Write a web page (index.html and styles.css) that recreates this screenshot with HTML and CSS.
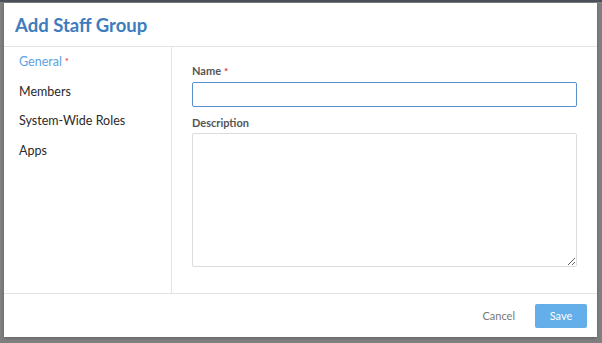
FILE: index.html
```html
<!DOCTYPE html>
<html lang="en">

<head>
    <meta charset="UTF-8">
    <meta name="viewport" content="width=device-width, initial-scale=1.0">
    <title>Add Staff Group</title>
    <link rel="stylesheet" href="styles.css">
</head>

<body>
    <div class="topbar"></div>

    <section class="modal">
        <header class="modal-header">
            <h1>Add Staff Group</h1>
        </header>

        <div class="modal-body">
            <nav class="modal-nav">
                <a class="active" href="#">General<span class="req">*</span></a>
                <a href="#">Members</a>
                <a href="#">System-Wide Roles</a>
                <a href="#">Apps</a>
            </nav>

            <form class="modal-form">
                <label for="name">Name<span class="req">*</span></label>
                <input type="text" id="name">

                <label for="description" class="label-desc">Description</label>
                <textarea id="description"></textarea>
            </form>
        </div>

        <footer class="modal-footer">
            <button type="button" class="btn-cancel">Cancel</button>
            <button type="button" class="btn-save">Save</button>
        </footer>
    </section>
</body>

</html>
```

FILE: styles.css
```css
body {
    margin: 0;
    padding: 0;
    box-sizing: border-box;
    background-color: #7f7f7f;
    font-family: Lato, "Open Sans", sans-serif;
    height: 343px;
    overflow: hidden;
}

.topbar {
    height: 2px;
    background-color: #4b505a;
}

.modal {
    margin: 1px 5px 0 4px;
    height: 334px;
    background-color: #ffffff;
    display: flex;
    flex-direction: column;
    box-shadow: 0 1px 3px #00000040;
}

.modal-header {
    height: 43px;
    border-bottom: 1px solid #e3e3e3;
    display: flex;
    align-items: center;
    padding-left: 11px;
}

.modal-header h1 {
    margin: 0;
    font-size: 18.5px;
    font-weight: 700;
    color: #3d7dbd;
}

.modal-body {
    flex: 1;
    display: flex;
    border-bottom: 1px solid #e3e3e3;
}

.modal-nav {
    width: 167px;
    border-right: 1px solid #e3e3e3;
    display: flex;
    flex-direction: column;
    padding-top: 7px;
}

.modal-nav a {
    display: block;
    height: 29.6px;
    padding-left: 15px;
    font-size: 12.5px;
    line-height: 15px;
    color: #2a2a2a;
    text-decoration: none;
}

.modal-nav a.active {
    color: #5ba2e6;
}

.req {
    color: #e0302a;
    margin-left: 3px;
    font-size: 10px;
    vertical-align: top;
}

.modal-form {
    flex: 1;
    display: flex;
    flex-direction: column;
    padding: 17px 20px 0 20px;
}

.modal-form label {
    font-size: 11px;
    font-weight: 700;
    color: #555555;
    line-height: 14px;
    margin-bottom: 4px;
}

.modal-form .label-desc {
    margin-bottom: 3px;
}

.modal-form input,
.modal-form textarea {
    box-sizing: border-box;
    width: 385px;
    border: 1px solid #dcdcdc;
    border-radius: 2px;
    font-family: inherit;
    font-size: 12px;
    padding: 4px 6px;
    margin: 0;
}

.modal-form input {
    height: 25px;
    border-color: #5b8fd0;
    margin-bottom: 9px;
}

.modal-form textarea {
    height: 134px;
    resize: vertical;
}

.modal-footer {
    height: 43px;
    display: flex;
    justify-content: flex-end;
    align-items: center;
    gap: 20px;
    padding-right: 10px;
}

.btn-cancel,
.btn-save {
    font-family: inherit;
    font-size: 11px;
    border: none;
    cursor: pointer;
}

.btn-cancel {
    padding: 0;
    background-color: transparent;
    color: #777777;
}

.btn-save {
    width: 52px;
    height: 24px;
    background-color: #64aeea;
    color: #ffffff;
    border-radius: 2px;
}
```
